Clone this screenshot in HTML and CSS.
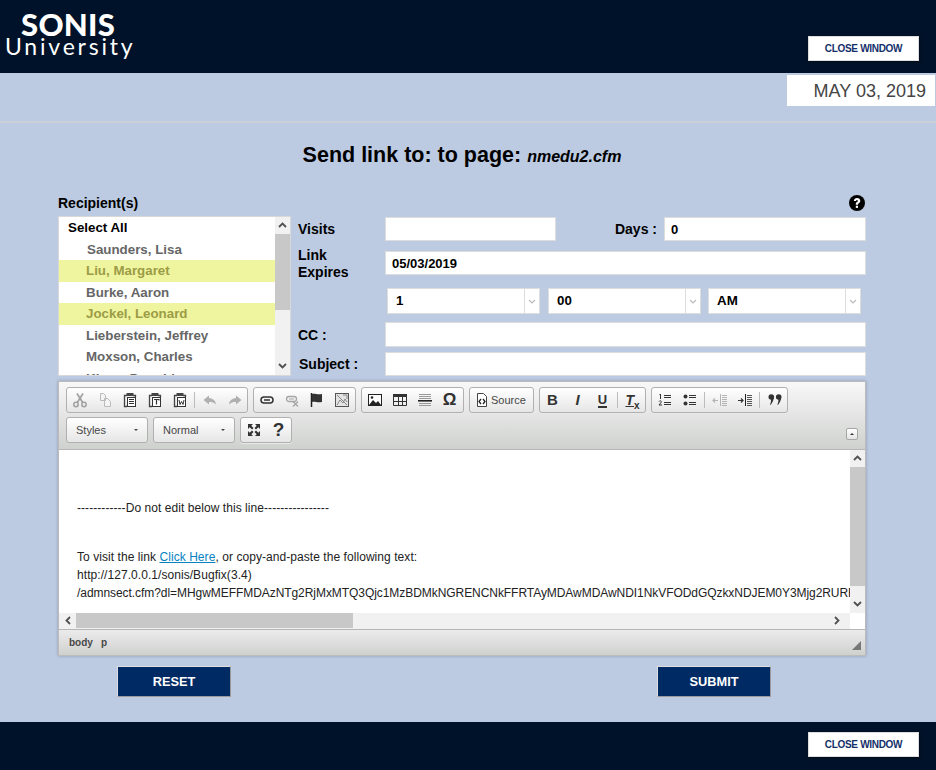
FILE: index.html
```html
<!DOCTYPE html>
<html lang="en">
<head>
<meta charset="utf-8">
<title>Send link</title>
<link rel="stylesheet" href="styles.css">
</head>
<body>
<header class="topbar">
  <div class="logo"><div class="logo-main">SONIS</div><div class="logo-sub">University</div></div>
  <button class="close-btn top-close">CLOSE WINDOW</button>
</header>
<div class="date-row"><div class="date-box">MAY 03, 2019</div></div>
<div class="rule"></div>
<main class="content">
  <h1 class="title">Send link to: to page: <em>nmedu2.cfm</em></h1>
  <div class="rec-head">
    <span class="rec-label">Recipient(s)</span>
    <svg class="help" viewBox="0 0 16 16"><circle cx="8" cy="8" r="8" fill="#000"/><path d="M4.800 6.100C4.900 4.200 6.300 3 8.100 3c1.900 0 3.200 1.200 3.200 2.800 0 1.200-.7 1.900-1.500 2.400-.6.400-.8.600-.8 1.200v.3H6.800V9.100c0-1 .4-1.500 1.100-2 .6-.4.9-.7.9-1.200 0-.5-.3-.8-.8-.8-.6 0-.9.4-1 1z" fill="#fff"/><rect x="6.800" y="10.700" width="2.200" height="2.200" fill="#fff"/></svg>
  </div>
  <div class="top-grid">
    <div class="listbox">
      <div class="list-items">
        <div class="li all">Select All</div>
        <div class="li first">Saunders, Lisa</div>
        <div class="li hl">Liu, Margaret</div>
        <div class="li">Burke, Aaron</div>
        <div class="li hl">Jockel, Leonard</div>
        <div class="li">Lieberstein, Jeffrey</div>
        <div class="li">Moxson, Charles</div>
        <div class="li">Klaus, Donald</div>
      </div>
      <div class="vscroll list-scroll">
        <svg class="arrow" viewBox="0 0 9 6"><path d="M1 5l3.500-3.500L8 5" fill="none" stroke="#505050" stroke-width="1.800"/></svg>
        <div class="thumb list-thumb"></div>
        <div class="fill"></div>
        <svg class="arrow" viewBox="0 0 9 6"><path d="M1 1l3.500 3.500L8 1" fill="none" stroke="#505050" stroke-width="1.800"/></svg>
      </div>
    </div>
    <div class="fields">
      <div class="row row-visits">
        <label class="lbl">Visits</label>
        <input class="inp visits" type="text">
        <label class="lbl days">Days :</label>
        <input class="inp grow" type="text" value="0">
      </div>
      <div class="row row-link">
        <label class="lbl two">Link Expires</label>
        <input class="inp grow" type="text" value="05/03/2019">
      </div>
      <div class="row row-time">
        <div class="sel"><span class="sel-v">1</span><span class="sel-a"><svg viewBox="0 0 8 5"><path d="M1 1l3 3 3-3" fill="none" stroke="#bbb" stroke-width="1.200"/></svg></span></div>
        <div class="sel"><span class="sel-v">00</span><span class="sel-a"><svg viewBox="0 0 8 5"><path d="M1 1l3 3 3-3" fill="none" stroke="#bbb" stroke-width="1.200"/></svg></span></div>
        <div class="sel"><span class="sel-v">AM</span><span class="sel-a"><svg viewBox="0 0 8 5"><path d="M1 1l3 3 3-3" fill="none" stroke="#bbb" stroke-width="1.200"/></svg></span></div>
      </div>
      <div class="row row-cc">
        <label class="lbl">CC :</label>
        <input class="inp grow" type="text">
      </div>
      <div class="row row-subject">
        <label class="lbl">Subject :</label>
        <input class="inp grow" type="text">
      </div>
    </div>
  </div>

  <section class="editor">
    <div class="toolbar">
      <div class="tb-lines">
        <div class="tb-row">
          <div class="grp">
            <span class="b"><svg viewBox="0 0 16 16"><circle cx="4" cy="12.500" r="2.200" fill="none" stroke="#a0a0a0" stroke-width="1.500"/><circle cx="12" cy="12.500" r="2.200" fill="none" stroke="#a0a0a0" stroke-width="1.500"/><path d="M5.300 10.500L11 1.500M10.700 10.500L5 1.500" stroke="#a0a0a0" stroke-width="1.700"/></svg></span>
            <span class="b"><svg viewBox="0 0 16 16"><path d="M3.500 1.500h3l2 2v5h-5zM7.500 6.500h3l3 3v5h-6z" fill="#f4f4f4" stroke="#bbb"/></svg></span>
            <span class="b"><svg viewBox="0 0 16 16"><use href="#clip"/><path d="M7 7.500h5M7 9.500h5M7 11.500h5" stroke="#333"/></svg></span>
            <span class="b"><svg viewBox="0 0 16 16"><use href="#clip"/><path d="M7 7.500h5v1M9.500 7.500v5" fill="none" stroke="#333" stroke-width="1.200"/></svg></span>
            <span class="b"><svg viewBox="0 0 16 16"><use href="#clip"/><path d="M7 8l1 4.500 1.500-3 1.500 3 1-4.500" fill="none" stroke="#333"/></svg></span>
            <i class="sep"></i>
            <span class="b"><svg viewBox="0 0 16 16"><path d="M7 3.500L1.500 8 7 12.500V10c3 0 5 .5 7 2.500-.5-4-3-6-7-6.500z" fill="#b0b0b0"/></svg></span>
            <span class="b"><svg viewBox="0 0 16 16"><path d="M9 3.500L14.500 8 9 12.500V10c-3 0-5 .5-7 2.500.5-4 3-6 7-6.500z" fill="#b0b0b0"/></svg></span>
          </div>
          <div class="grp pad">
            <span class="b"><svg viewBox="0 0 16 16"><rect x="2" y="5" width="12" height="6" rx="3" fill="none" stroke="#333" stroke-width="1.500"/><path d="M5 8h6" stroke="#333" stroke-width="1.500"/></svg></span>
            <span class="b"><svg viewBox="0 0 16 16"><rect x="2.500" y="4.500" width="10" height="5" rx="2.500" fill="none" stroke="#a5a5a5" stroke-width="1.300"/><path d="M5 7h5" stroke="#a5a5a5"/><path d="M9 9.500l5 5M14 9.500l-5 5" stroke="#a5a5a5" stroke-width="1.300"/></svg></span>
            <span class="b"><svg viewBox="0 0 16 16"><path d="M2.500 1v14" stroke="#222" stroke-width="1.500"/><path d="M3 2c3-1 5 1 10 0v8c-5 1-7-1-10 0z" fill="#333"/></svg></span>
            <span class="b"><svg viewBox="0 0 16 16"><rect x="1.500" y="1.500" width="13" height="13" fill="#e4e4e4" stroke="#555"/><path d="M3 3l10 10M3 13l3-5 3 3 2-4 2 3M9 3h4v4" fill="none" stroke="#888"/></svg></span>
          </div>
          <div class="grp pad">
            <span class="b"><svg viewBox="0 0 16 16"><rect x="1.500" y="2.500" width="13" height="11" fill="#fff" stroke="#222"/><path d="M2 13l4-5 3 3 2-2 3 4z" fill="#222"/><circle cx="5" cy="5.500" r="1.300" fill="#222"/></svg></span>
            <span class="b"><svg viewBox="0 0 16 16"><rect x="1" y="2" width="14" height="3" fill="#333"/><path d="M1.500 2.500h13v11h-13zM1.500 9.500h13M6.500 5v8.500M10.500 5v8.500" fill="none" stroke="#333"/></svg></span>
            <span class="b"><svg viewBox="0 0 16 16"><path d="M2 2.500h12M2 4.500h12M2 6.500h12M2 11.500h12M2 13.500h12" stroke="#999"/><path d="M1 8.800h14" stroke="#222" stroke-width="1.600"/></svg></span>
            <span class="b"><span class="omega">Ω</span></span>
          </div>
          <div class="grp">
            <span class="b src"><svg viewBox="0 0 16 16"><path d="M3.500 1.500h6l3 3v10h-9z" fill="#fff" stroke="#444"/><path d="M7 7L5 9.500 7 12M9 7l2 2.500L9 12" fill="none" stroke="#222" stroke-width="1.300"/></svg><span class="src-t">Source</span></span>
          </div>
          <div class="grp">
            <span class="b"><span class="glyph bold">B</span></span>
            <span class="b"><span class="glyph ital">I</span></span>
            <span class="b"><span class="glyph und">U</span></span>
            <i class="sep"></i>
            <span class="b"><span class="glyph tx">T<sub>x</sub></span></span>
          </div>
          <div class="grp">
            <span class="b"><svg viewBox="0 0 16 16"><path d="M7 3.500h7M7 5.500h7M7 10.500h7M7 12.500h7" stroke="#333" stroke-width="1.200"/><path d="M3.500 2v5M2.500 3l1-1M2 9.500c1-1.500 3-.5 2 1l-2 2.500h3" fill="none" stroke="#333"/></svg></span>
            <span class="b"><svg viewBox="0 0 16 16"><circle cx="3.500" cy="4.500" r="2" fill="#333"/><circle cx="3.500" cy="11.500" r="2" fill="#333"/><path d="M7 3.500h7M7 5.500h7M7 10.500h7M7 12.500h7" stroke="#333" stroke-width="1.200"/></svg></span>
            <i class="sep"></i>
            <span class="b"><svg viewBox="0 0 16 16"><path d="M10 3.500h5M10 5.500h5M10 7.500h5M10 9.500h5M10 11.500h5M10 13.500h5M8.500 2v12" stroke="#b4b4b4"/><path d="M1 8.500h5M3 6.500l-2 2 2 2" fill="none" stroke="#b4b4b4" stroke-width="1.200"/></svg></span>
            <span class="b"><svg viewBox="0 0 16 16"><path d="M10 3.500h5M10 5.500h5M10 7.500h5M10 9.500h5M10 11.500h5M10 13.500h5" stroke="#555"/><path d="M8.500 2v12" stroke="#222"/><path d="M1 8.500h5M4 6.500l2 2-2 2" fill="none" stroke="#333" stroke-width="1.200"/></svg></span>
            <i class="sep"></i>
            <span class="b"><svg viewBox="0 0 16 16"><circle cx="4.300" cy="5" r="2.800" fill="#333"/><path d="M6.800 5.500C6.700 9 5 11 3.500 13L3 12.500C4 10.500 4 9 4 7z" fill="#333"/><circle cx="11.700" cy="5" r="2.800" fill="#333"/><path d="M14.200 5.500C14.100 9 12.400 11 10.900 13l-.5-.5c1-2 1-3.500 1-5.500z" fill="#333"/></svg></span>
          </div>
        </div>
        <div class="tb-row second">
          <div class="combo styles"><span>Styles</span><i class="caret"></i></div>
          <div class="combo normal"><span>Normal</span><i class="caret"></i></div>
          <div class="grp">
            <span class="b"><svg viewBox="0 0 16 16"><path d="M2 2h5L5.300 3.700 7.500 6 6 7.500 3.700 5.300 2 7zM14 2v5l-1.700-1.700L10 7.500 8.500 6l2.200-2.300L9 2zM2 14V9l1.700 1.700L6 8.500 7.500 10l-2.200 2.300L7 14zM14 14H9l1.700-1.700L8.500 10 10 8.500l2.300 2.200L14 9z" fill="#333"/></svg></span>
            <span class="b"><span class="glyph q">?</span></span>
          </div>
        </div>
      </div>
      <span class="collapse"><i></i></span>
    </div>
    <div class="ed-body">
      <div class="ed-main">
        <div class="ed-text">
          <p class="dash wide">------------Do not edit below this line----------------</p>
          <p class="visit wide">To visit the link <a href="#">Click Here</a>, or copy-and-paste the following text:</p>
          <p class="wide">http://127.0.0.1/sonis/Bugfix(3.4)</p>
          <p class="tight">/admnsect.cfm?dl=MHgwMEFFMDAzNTg2RjMxMTQ3Qjc1MzBDMkNGRENCNkFFRTAyMDAwMDAwNDI1NkVFODdGQzkxNDJEM0Y3Mjg2RURFNTA</p>
        </div>
        <div class="vscroll ed-scroll">
          <svg class="arrow" viewBox="0 0 9 6"><path d="M1 5l3.500-3.500L8 5" fill="none" stroke="#505050" stroke-width="1.800"/></svg>
          <div class="thumb ed-thumb"></div>
          <div class="fill"></div>
          <svg class="arrow" viewBox="0 0 9 6"><path d="M1 1l3.500 3.500L8 1" fill="none" stroke="#505050" stroke-width="1.800"/></svg>
        </div>
      </div>
      <div class="hscroll">
        <svg class="harrow" viewBox="0 0 6 9"><path d="M5 1L1.500 4.500 5 8" fill="none" stroke="#505050" stroke-width="1.800"/></svg>
        <div class="hthumb"></div>
        <div class="fill"></div>
        <svg class="harrow" viewBox="0 0 6 9"><path d="M1 1l3.500 3.500L1 8" fill="none" stroke="#505050" stroke-width="1.800"/></svg>
        <div class="corner"></div>
      </div>
    </div>
    <div class="ed-foot">
      <span class="crumb">body</span><span class="crumb">p</span>
      <svg class="resize" viewBox="0 0 9 9"><path d="M9 0v9H0z" fill="#777"/></svg>
    </div>
  </section>

  <div class="actions">
    <button class="act">RESET</button>
    <button class="act">SUBMIT</button>
  </div>
</main>
<footer class="botbar"><button class="close-btn">CLOSE WINDOW</button></footer>
<svg class="defs" width="0" height="0"><defs><g id="clip"><path d="M5 3.500H2.500v11H5" fill="none" stroke="#444" stroke-width="1.300"/><path d="M11 3.500h2.500V5" fill="none" stroke="#444" stroke-width="1.300"/><rect x="4.500" y="1" width="7" height="3" fill="#444"/><rect x="5.500" y="5.500" width="8" height="9" fill="#fff" stroke="#333"/></g></defs></svg>
</body>
</html>
```
FILE: styles.css
```css
* { box-sizing: border-box; }
html, body { margin: 0; padding: 0; }
body { width: 936px; height: 770px; overflow: hidden; background: #bccbe2; font-family: "Liberation Sans", Arial, sans-serif; color: #000; }
.defs { position: absolute; }

.topbar { height: 73px; background: #001229; display: flex; justify-content: space-between; padding-left: 5px; }
.logo { color: #fff; font-family: Lato, sans-serif; width: 130px; }
.logo-main { font-weight: 900; font-size: 31px; line-height: 26px; margin-top: 11px; margin-left: 16px; letter-spacing: .3px; }
.logo-sub { font-weight: 400; font-size: 23px; line-height: 18px; letter-spacing: 2.800px; white-space: nowrap; }
.close-btn { width: 111px; height: 25px; background: #fff; border: 1px solid #ddd; box-shadow: 1px 1px 3px rgba(0,0,0,.4); color: #14306a; font: bold 10px "Liberation Sans", Arial, sans-serif; letter-spacing: -.3px; padding: 0; }
.top-close { margin: 36px 17px 0 0; }

.date-row { display: flex; justify-content: flex-end; padding: 2px 1px 0 0; }
.date-box { width: 148px; height: 31px; background: #fff; color: #444; font-size: 18px; line-height: 32px; text-align: right; padding-right: 9px; }
.rule { height: 2px; background: #ccd0d8; margin-top: 15px; }

.content { width: 808px; margin-left: 58px; }
.title { margin: 20px 0 0; height: 24px; font-size: 21.500px; line-height: 24px; font-weight: 700; text-align: center; }
.title em { font-size: 16px; }

.rec-head { display: flex; justify-content: space-between; align-items: center; height: 18px; margin-top: 27px; padding-right: 1px; }
.rec-label { font-size: 14px; font-weight: 700; }
.help { width: 16px; height: 16px; }

.top-grid { display: flex; height: 165px; margin-top: 4px; }
.listbox { width: 233px; height: 160px; background: #fff; border: 1px solid #d8d8d8; display: flex; overflow: hidden; }
.list-items { flex: 1; min-width: 0; }
.li { height: 21.500px; line-height: 21px; font-size: 13.330px; font-weight: 700; color: #666; padding-left: 27px; white-space: nowrap; }
.li.all { color: #000; padding-left: 9px; }
.li.first { padding-left: 28px; }
.li.hl { background: #eff49e; color: #9c9c46; }

.vscroll { width: 15px; background: #f1f1f1; display: flex; flex-direction: column; align-items: center; flex: none; }
.arrow { width: 9px; height: 6px; margin: 5px 0 6px; flex: none; }
.thumb { width: 15px; background: #c8c8c8; flex: none; }
.fill { flex: 1; }
.list-thumb { height: 76px; }
.list-scroll { height: 158px; }

.fields { flex: 1; margin-left: 7px; min-width: 0; }
.row { display: flex; align-items: center; }
.lbl { width: 87px; font-size: 14px; font-weight: 700; flex: none; }
.inp { height: 100%; border: 1px solid #ddd; background: #fff; font: bold 13px "Liberation Sans", Arial, sans-serif; color: #000; padding: 0 6px; outline: none; min-width: 0; }
.grow { flex: 1; }
.visits { width: 171px; flex: none; }
.days { width: 108px; text-align: right; padding-right: 7px; }
.two { line-height: 17px; padding: 2px 30px 0 0; }
.row-visits { height: 24px; margin-top: 1px; }
.row-link { height: 24px; margin-top: 10px; }
.row-time { height: 26px; margin-top: 13px; padding-left: 89px; gap: 8px; padding-right: 5px; }
.row-cc { height: 25px; margin-top: 8px; }
.row-subject { height: 24px; margin-top: 5px; }
.row-subject .lbl { padding-left: 1px; }
.sel { width: 153px; height: 100%; flex: none; background: #fff; border: 1px solid #ddd; display: flex; font-size: 13.330px; font-weight: 700; }
.sel:last-child { margin-left: -1px; }
.sel-v { flex: 1; line-height: 24px; padding-left: 8px; }
.sel-a { width: 15px; border-left: 1px solid #ddd; display: flex; align-items: center; justify-content: center; }
.sel-a svg { width: 8px; height: 5px; }

.editor { height: 275px; border: 1px solid #bbb; background: #fff; box-shadow: 0 0 3px rgba(0,0,0,.25); display: flex; flex-direction: column; }
.toolbar { height: 68px; flex: none; background: linear-gradient(#f8f8f8, #cfd1cf); border-bottom: 1px solid #b6b6b6; display: flex; justify-content: space-between; padding: 5px 7px 0 7px; }
.tb-row { display: flex; gap: 5px; height: 26px; }
.tb-row.second { margin-top: 4px; }
.grp { display: flex; align-items: center; height: 26px; border: 1px solid #b0b0b0; border-radius: 3px; background: linear-gradient(#fff, #e6e6e6); box-shadow: 0 1px 0 #e8e8e8; }
.grp.pad { padding-right: 1px; }
.b { width: 25px; height: 24px; display: flex; align-items: center; justify-content: center; flex: none; }
.b svg { width: 16px; height: 16px; }
.b.src { width: 63px; padding-left: 4px; justify-content: flex-start; gap: 1px; }
.src-t { font-size: 11px; color: #474747; }
.sep { width: 1px; height: 16px; background: #bcbcbc; margin: 0 2px; flex: none; }
.omega { font: bold 17px "Liberation Sans", Arial, sans-serif; color: #333; }
.glyph { font-family: "Liberation Sans", Arial, sans-serif; color: #333; line-height: 16px; }
.bold { font-size: 15px; font-weight: 700; }
.ital { font-size: 15px; font-weight: 700; font-style: italic; }
.und { font-size: 13px; font-weight: 700; border-bottom: 2px solid #333; line-height: 13px; }
.tx { font-size: 14px; font-weight: 700; font-style: italic; text-decoration: underline; }
.tx sub { font-size: 10px; font-style: normal; line-height: 0; display: inline-block; }
.q { font-size: 19px; font-weight: 700; }
.combo { width: 82px; height: 26px; border: 1px solid #b0b0b0; border-radius: 3px; background: linear-gradient(#fff, #e6e6e6); display: flex; align-items: center; justify-content: space-between; padding: 0 9px; font-size: 11px; color: #474747; }
.caret { width: 0; height: 0; border: 2.500px solid transparent; border-top-color: #474747; border-bottom: 0; }
.collapse { width: 12px; height: 12px; margin-top: 41px; border: 1px solid #a6a6a6; border-radius: 2px; background: linear-gradient(#fff, #e4e4e4); display: flex; align-items: center; justify-content: center; }
.collapse i { width: 0; height: 0; border: 2px solid transparent; border-bottom-color: #333; border-top: 0; }

.ed-body { height: 179px; flex: none; display: flex; flex-direction: column; }
.ed-main { flex: 1; display: flex; min-height: 0; }
.ed-text { flex: 1; min-width: 0; overflow: hidden; padding: 49px 0 0 18px; font-size: 12px; color: #222; }
.ed-text p { margin: 0; line-height: 18px; white-space: nowrap; }
.ed-text .visit { margin-top: 31px; }
.ed-text a { color: #0782c1; }
.wide { letter-spacing: .06px; }
.tight { letter-spacing: -.06px; }
.ed-thumb { height: 119px; }
.hscroll { height: 16px; flex: none; display: flex; align-items: flex-start; background: #f1f1f1; }
.harrow { width: 6px; height: 9px; margin: 3px 5px 0 6px; flex: none; }
.hthumb { width: 277px; height: 15px; background: #c8c8c8; flex: none; }
.corner { width: 15px; height: 16px; background: #fff; flex: none; margin-left: 5px; }
.ed-foot { flex: 1; border-top: 1px solid #b6b6b6; background: linear-gradient(#ebebeb, #cfd1cf); display: flex; align-items: center; padding: 0 4px 0 10px; gap: 8px; }
.crumb { font-size: 10px; font-weight: 700; color: #484848; }
.resize { width: 9px; height: 9px; margin-left: auto; margin-top: 5px; }

.actions { display: flex; gap: 426px; margin: 10px 0 0 59px; }
.act { width: 114px; height: 31px; background: #002a63; color: #fff; border: 1px solid #9a9a9a; border-top-color: #ddd; border-left-color: #ddd; font: bold 12.800px "Liberation Sans", Arial, sans-serif; padding: 0; }

.botbar { height: 48px; margin-top: 25px; background: #001229; display: flex; justify-content: flex-end; padding: 10px 17px 0 0; }
```
